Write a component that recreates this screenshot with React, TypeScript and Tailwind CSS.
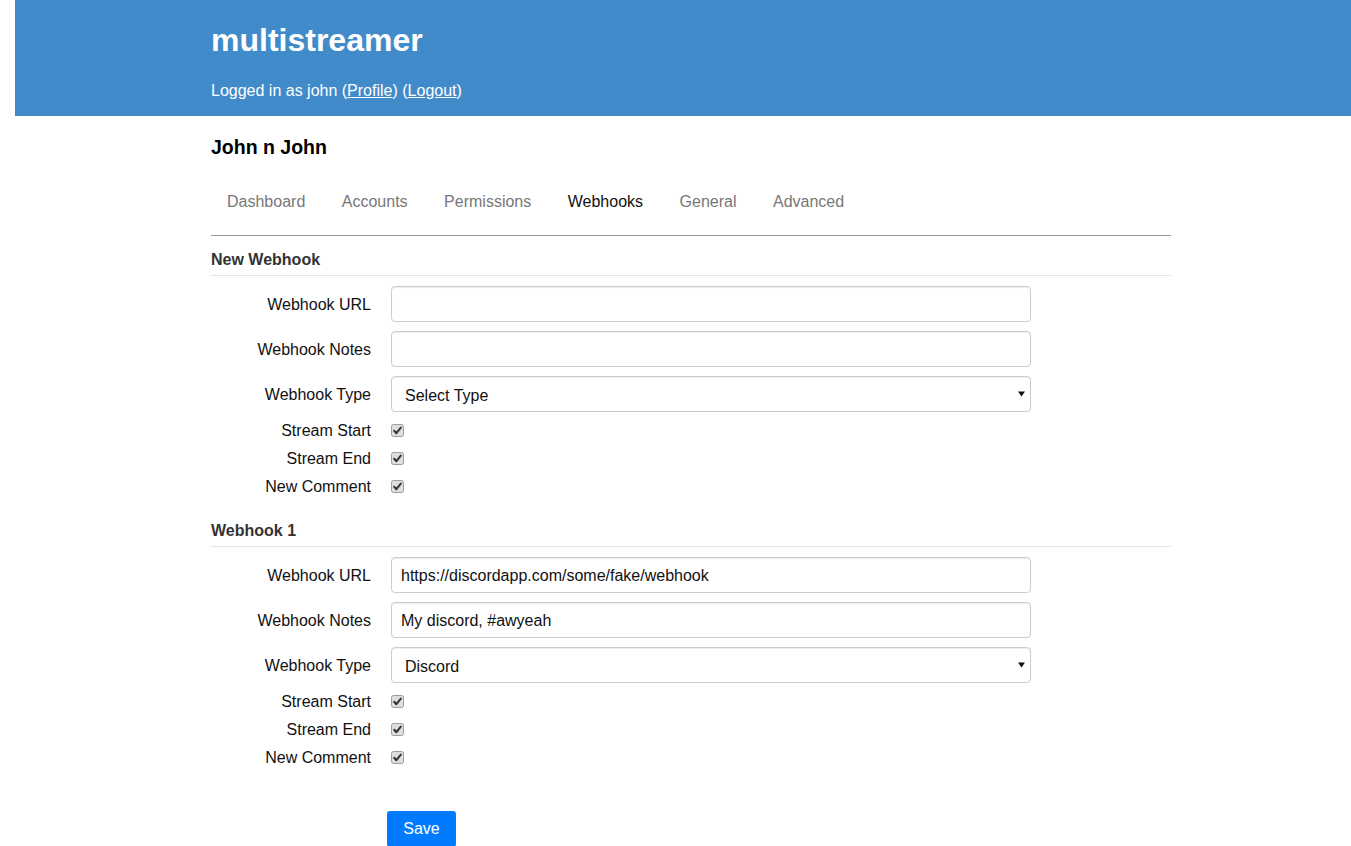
import React from "react";

function Check() {
  return (
    <svg width="13" height="13" viewBox="0 0 13 13" className="block">
      <rect x="0.5" y="0.5" width="12" height="12" rx="2" fill="#dedede" stroke="#9c9c9c" />
      <path d="M3.2 6.8 L5.4 9.2 L9.8 3.6" fill="none" stroke="#333" strokeWidth="2" strokeLinecap="round" strokeLinejoin="round" />
    </svg>
  );
}

function TextRow({ label, value }: { label: string; value?: string }) {
  return (
    <div className="flex items-center">
      <div className="w-[160px] pt-[2px] text-right text-[16px] text-[#111]">{label}</div>
      <div className="ml-[20px] flex h-[36px] w-[640px] items-center rounded-[4px] border border-[#ccc] bg-white pl-[9px] pt-[2px] text-[16px] text-[#111] shadow-[inset_0_1px_1px_rgba(0,0,0,0.075)]">
        {value}
      </div>
    </div>
  );
}

function SelectRow({ value }: { value: string }) {
  return (
    <div className="flex items-center">
      <div className="w-[160px] pt-[2px] text-right text-[16px] text-[#111]">Webhook Type</div>
      <div className="ml-[20px] flex h-[36px] w-[640px] items-center justify-between rounded-[4px] border border-[#ccc] bg-white pl-[13px] pr-[5px] pt-[3px] text-[16px] text-[#111] shadow-[inset_0_1px_1px_rgba(0,0,0,0.075)]">
        <span>{value}</span>
        <svg width="7" height="6" viewBox="0 0 7 6" className="mb-[3px]">
          <polygon points="0,0.5 7,0.5 3.5,5.5" fill="#111" />
        </svg>
      </div>
    </div>
  );
}

function CheckRow({ label }: { label: string }) {
  return (
    <div className="flex h-[28px] items-center">
      <div className="w-[160px] pt-[2px] text-right text-[16px] text-[#111]">{label}</div>
      <div className="ml-[20px]">
        <Check />
      </div>
    </div>
  );
}

function Section({ title, url, notes, type }: { title: string; url?: string; notes?: string; type: string }) {
  return (
    <div>
      <div className="border-b border-[#e5e5e5] pb-[3px] pt-[1px] text-[16px] font-bold leading-[24px] text-[#333]">{title}</div>
      <div className="mt-[10px] flex flex-col gap-[9px]">
        <TextRow label="Webhook URL" value={url} />
        <TextRow label="Webhook Notes" value={notes} />
        <SelectRow value={type} />
      </div>
      <div className="mt-[4px] flex flex-col">
        <CheckRow label="Stream Start" />
        <CheckRow label="Stream End" />
        <CheckRow label="New Comment" />
      </div>
    </div>
  );
}

export default function App() {
  const tabs = ["Dashboard", "Accounts", "Permissions", "Webhooks", "General", "Advanced"];
  return (
    <div className="min-h-[900px] bg-white font-['Liberation_Sans',Arial,sans-serif]">
      <header className="ml-[15px] h-[116px] bg-[#428bca] pl-[196px] pt-[20px] text-white">
        <h1 className="text-[32px] font-bold leading-[40px]">multistreamer</h1>
        <p className="mt-[19px] text-[16px] leading-[24px]">
          Logged in as john (<a className="underline">Profile</a>) (<a className="underline">Logout</a>)
        </p>
      </header>
      <main className="ml-[211px] w-[960px] pt-[19px]">
        <h2 className="text-[19.5px] font-bold leading-[24px] text-black">John n John</h2>
        <nav className="mt-[20px] flex gap-[4.5px] border-b border-[#999] pb-[12px]">
          {tabs.map((t) => (
            <span
              key={t}
              className={
                t === "Webhooks"
                  ? "px-[16px] pb-[9px] pt-[11px] text-[16px] leading-[24px] text-[#111]"
                  : "px-[16px] pb-[9px] pt-[11px] text-[16px] leading-[24px] text-[#777]"
              }
            >
              {t}
            </span>
          ))}
        </nav>
        <div className="mt-[11px]">
          <Section title="New Webhook" type="Select Type" />
        </div>
        <div className="mt-[18px]">
          <Section
            title="Webhook 1"
            url="https://discordapp.com/some/fake/webhook"
            notes="My discord, #awyeah"
            type="Discord"
          />
        </div>
        <div className="mt-[40px] pl-[176px]">
          <button className="h-[36px] w-[69px] rounded-[3px] bg-[#007bff] text-[16px] text-white">Save</button>
        </div>
      </main>
    </div>
  );
}
